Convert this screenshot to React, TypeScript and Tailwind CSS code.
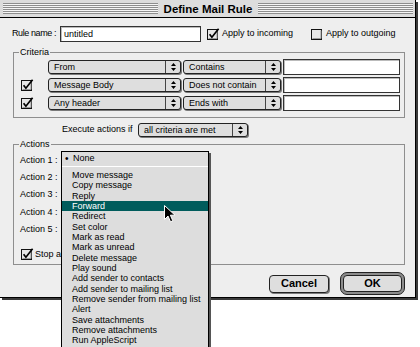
import React from "react";

function Check({ checked }: { checked: boolean }) {
  return (
    <svg width="13" height="12" viewBox="0 0 13 12" className="block shrink-0">
      <rect x="0.5" y="1.5" width="10" height="10" fill="#e6e6e6" stroke="#111" />
      <path d="M1.5 10.5 H10 V2.5" fill="none" stroke="#9a9a9a" />
      {checked && (
        <path d="M2.6 6.2 L4.9 9.2 L11.6 0.8" fill="none" stroke="#000" strokeWidth="1.7" />
      )}
    </svg>
  );
}

function Arrows() {
  return (
    <svg width="7" height="10" viewBox="0 0 7 10" className="block">
      <path d="M3.5 1 L6 4 L1 4 Z M1 6 L6 6 L3.5 9 Z" fill="#000" />
    </svg>
  );
}

function Popup({ label, className }: { label: string; className: string }) {
  return (
    <div
      className={
        "flex h-[14px] shrink-0 rounded-[3px] border border-[#222] bg-[#dedede] shadow-[1px_1px_0_#7a7a7a] " +
        className
      }
    >
      <div className="flex-1 pl-[5px] leading-[12px] whitespace-nowrap overflow-hidden">{label}</div>
      <div className="w-[15px] border-l border-[#444] flex items-center justify-center">
        <Arrows />
      </div>
    </div>
  );
}

function Field({ className, text }: { className: string; text?: string }) {
  return (
    <div
      className={
        "h-[16px] shrink-0 border border-[#333] bg-white shadow-[inset_1px_1px_0_#bbb] pl-[3px] leading-[14px] " +
        className
      }
    >
      {text}
    </div>
  );
}

const items = [
  "Move message",
  "Copy message",
  "Reply",
  "Forward",
  "Redirect",
  "Set color",
  "Mark as read",
  "Mark as unread",
  "Delete message",
  "Play sound",
  "Add sender to contacts",
  "Add sender to mailing list",
  "Remove sender from mailing list",
  "Alert",
  "Save attachments",
  "Remove attachments",
  "Run AppleScript",
];

export default function App() {
  return (
    <div className="w-[420px] h-[347px] bg-white relative overflow-hidden font-['Liberation_Sans',Arial,sans-serif] text-[9px] text-black">
      {/* window */}
      <div className="w-[416px] h-[298px] bg-[#eeeeee] border-r border-b border-black shadow-[2px_2px_0_#3a3a3a] flex flex-col">
        {/* title bar */}
        <div className="h-[18px] shrink-0 bg-[#dddddd] border-b border-black flex items-center pl-[3px] pr-[2px] gap-[6px]">
          <div className="flex-1 h-[11px] bg-[repeating-linear-gradient(to_bottom,#8e8e8e_0px,#8e8e8e_1px,#f6f6f6_1px,#f6f6f6_2px)]" />
          <div className="text-[11.5px] font-bold leading-[14px] whitespace-nowrap">Define Mail Rule</div>
          <div className="flex-1 h-[11px] bg-[repeating-linear-gradient(to_bottom,#8e8e8e_0px,#8e8e8e_1px,#f6f6f6_1px,#f6f6f6_2px)]" />
        </div>

        {/* content */}
        <div className="flex flex-col pt-[8px]">
          {/* rule name row */}
          <div className="flex items-center h-[16px] pl-[12px]">
            <div className="w-[48px] whitespace-nowrap tracking-[-0.4px]">Rule name :</div>
            <Field className="w-[141px]" text="untitled" />
            <div className="ml-[6px]">
              <Check checked />
            </div>
            <div className="ml-[2px] w-[87px] whitespace-nowrap">Apply to incoming</div>
            <div className="ml-[2px]">
              <Check checked={false} />
            </div>
            <div className="ml-[2px] whitespace-nowrap">Apply to outgoing</div>
          </div>

          {/* criteria group */}
          <div className="relative ml-[13px] mt-[10px] w-[392px] h-[66px] border border-[#8e8e8e] pt-[6px] pl-[7px] flex flex-col gap-[2px]">
            <div className="absolute left-[5px] -top-[6px] bg-[#eeeeee] px-[1px] leading-[10px]">Criteria</div>
            <div className="flex items-center h-[16px]">
              <div className="w-[13px]" />
              <Popup label="From" className="ml-[14px] w-[133px]" />
              <Popup label="Contains" className="ml-[2px] w-[98px]" />
              <Field className="ml-[2px] w-[117px]" />
            </div>
            <div className="flex items-center h-[16px]">
              <Check checked />
              <Popup label="Message Body" className="ml-[14px] w-[133px]" />
              <Popup label="Does not contain" className="ml-[2px] w-[98px]" />
              <Field className="ml-[2px] w-[117px]" />
            </div>
            <div className="flex items-center h-[16px]">
              <Check checked />
              <Popup label="Any header" className="ml-[14px] w-[133px]" />
              <Popup label="Ends with" className="ml-[2px] w-[98px]" />
              <Field className="ml-[2px] w-[117px]" />
            </div>
          </div>

          {/* execute row */}
          <div className="flex items-center mt-[5px] h-[14px] pl-[62px]">
            <div className="w-[76px] whitespace-nowrap">Execute actions if</div>
            <Popup label="all criteria are met" className="w-[110px]" />
          </div>

          {/* actions group */}
          <div className="relative ml-[13px] mt-[7px] w-[392px] h-[121px] border border-[#8e8e8e] pt-[7px] pl-[6px] flex flex-col">
            <div className="absolute left-[5px] -top-[6px] bg-[#eeeeee] px-[1px] leading-[10px]">Actions</div>
            {[1, 2, 3, 4, 5].map((n) => (
              <div key={n} className="h-[17.3px] flex items-center whitespace-nowrap">
                Action {n} :
              </div>
            ))}
            <div className="flex items-center mt-[10px] h-[12px] pl-[1px]">
              <Check checked />
              <div className="ml-[1px] w-[26px] overflow-hidden whitespace-nowrap">Stop applying rules</div>
            </div>
          </div>

          {/* buttons */}
          <div className="flex items-center justify-end mt-[7px] pr-[10px] h-[23px]">
            <div className="w-[60px] h-[18px] rounded-[4px] border border-[#222] bg-[#dedede] shadow-[1px_1px_0_#7a7a7a] flex items-center justify-center text-[11px] font-bold">
              Cancel
            </div>
            <div className="ml-[11px] w-[65px] h-[23px] rounded-[7px] border border-[#222] bg-[#8c8c8c] p-[2px] flex">
              <div className="flex-1 rounded-[4px] border border-[#222] bg-[#dedede] flex items-center justify-center text-[11px] font-bold">
                OK
              </div>
            </div>
          </div>
        </div>
      </div>

      {/* popup menu */}
      <div className="absolute left-[61px] top-[151px] w-[148px] h-[200px] border border-black bg-[#dddddd] shadow-[2px_2px_0_#555] flex flex-col">
        <div className="h-[14px] flex items-center pl-[3px] whitespace-nowrap">
          <span className="w-[8px] text-[10px] leading-[10px]">•</span>
          <span>None</span>
        </div>
        <div className="h-[1px] bg-white" />
        <div className="h-[3px]" />
        {items.map((t) => (
          <div
            key={t}
            className={
              "h-[10.33px] leading-[10.33px] pl-[10px] whitespace-nowrap " +
              (t === "Forward" ? "bg-[#005c5c] text-white" : "")
            }
          >
            {t}
          </div>
        ))}
      </div>

      {/* cursor */}
      <svg className="absolute left-[164px] top-[205px]" width="12" height="18" viewBox="0 0 12 18">
        <path d="M0.5 0.5 L0.5 14.5 L4 11 L6.5 16.8 L8.8 15.8 L6.4 10.2 L11 10.2 Z" fill="#000" stroke="#fff" strokeWidth="1" />
      </svg>
    </div>
  );
}
